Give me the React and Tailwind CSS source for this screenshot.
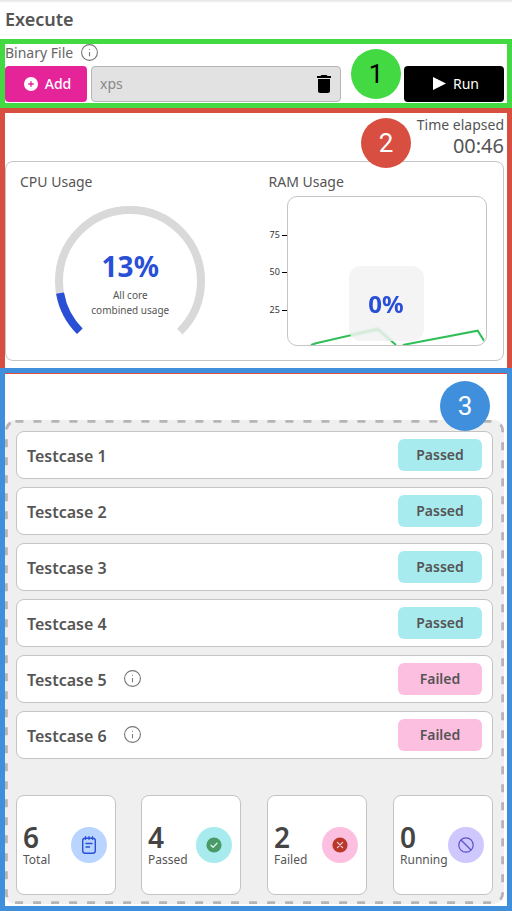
import React from 'react';
import { Info } from 'lucide-react';

const testcases = [
  { name: 'Testcase 1', status: 'Passed' },
  { name: 'Testcase 2', status: 'Passed' },
  { name: 'Testcase 3', status: 'Passed' },
  { name: 'Testcase 4', status: 'Passed' },
  { name: 'Testcase 5', status: 'Failed', info: true },
  { name: 'Testcase 6', status: 'Failed', info: true },
];

const TotalIcon = () => (
  <svg width="18" height="18" viewBox="0 0 18 18" fill="none" stroke="#2a4fd7" strokeWidth="1.4" strokeLinecap="round">
    <rect x="2.7" y="2.2" width="12.6" height="15" rx="2.4" />
    <path d="M5.5 0.8v2.4M9 0.8v2.4M12.5 0.8v2.4M6 7.5h6M6 11h3.5" />
  </svg>
);

const PassedIcon = () => (
  <svg width="16" height="16" viewBox="0 0 16 16" fill="none">
    <circle cx="8" cy="8" r="7.6" fill="#4a9a68" />
    <path d="M5 8.2l2.1 2 3.9-3.9" stroke="#d8f3ee" strokeWidth="1.3" strokeLinecap="round" strokeLinejoin="round" />
  </svg>
);

const FailedIcon = () => (
  <svg width="16" height="16" viewBox="0 0 16 16" fill="none">
    <circle cx="8" cy="8" r="7.6" fill="#b9382a" />
    <path d="M5.4 5.4l5.2 5.2M10.6 5.4l-5.2 5.2" stroke="#fbd5e4" strokeWidth="1.2" strokeLinecap="round" />
  </svg>
);

const RunningIcon = () => (
  <svg width="16" height="16" viewBox="0 0 16 16" fill="none" stroke="#5b4fc9" strokeWidth="1.2">
    <circle cx="8" cy="8" r="7.2" />
    <path d="M3 3l10 10" />
  </svg>
);

const stats = [
  { value: 6, label: 'Total', circle: 'bg-[#b8d4ff]', Icon: TotalIcon },
  { value: 4, label: 'Passed', circle: 'bg-[#a8ebee]', Icon: PassedIcon },
  { value: 2, label: 'Failed', circle: 'bg-[#fdbfe0]', Icon: FailedIcon },
  { value: 0, label: 'Running', circle: 'bg-[#cfc8ff]', Icon: RunningIcon },
];

const Badge = ({ n, className }) => (
  <div className={`absolute w-[50px] h-[50px] rounded-full flex items-center justify-center text-[26px] font-['Roboto',sans-serif] ${className}`}>
    {n}
  </div>
);

const Gauge = () => {
  // 270 degree ring, r=71, starting bottom left
  const r = 71;
  const total = 2 * Math.PI * r;
  const arc = total * 0.75;
  return (
    <div className="relative w-[150px] h-[150px] mx-auto">
      <svg width="150" height="150" viewBox="0 0 150 150" fill="none" strokeWidth="8">
        <circle cx="75" cy="75" r={r} stroke="#d9d9d9" strokeDasharray={`${arc} ${total}`} transform="rotate(135 75 75)" />
        <circle cx="75" cy="75" r={r} stroke="#2a4fd7" strokeDasharray={`${arc * 0.13} ${total}`} transform="rotate(135 75 75)" />
      </svg>
      <div className="absolute inset-0 flex flex-col items-center pt-[41px]">
        <p className="text-[28px] leading-[38px] font-bold text-[#2a4fd7]">13%</p>
        <p className="mt-[3px] text-[10px] leading-[15px] text-[#555] text-center">All core<br />combined usage</p>
      </div>
    </div>
  );
};

const RamChart = () => (
  <div className="relative ml-[18px] w-[200px] h-[150px] border border-[#c4c4c4] rounded-[10px] bg-white">
    {[['75', 38], ['50', 75], ['25', 113]].map(([label, top]) => (
      <div key={label} className="absolute left-[-18px] flex items-center gap-[1px] h-[10px]" style={{ top: top - 5 }}>
        <span className="text-[9px] leading-[10px] text-[#333] w-[11px]">{label}</span>
        <span className="w-[5px] h-px bg-black" />
      </div>
    ))}
    <div className="absolute inset-0 overflow-hidden rounded-[10px]">
      <svg width="198" height="148" viewBox="0 0 198 148" fill="none">
        <path d="M23 148L28 146.3L89.7 132L108 148M114.7 148L189.7 133.7L198 147" stroke="#2fbf56" strokeWidth="2" />
      </svg>
    </div>
    <div className="absolute left-[61px] top-[69px] w-[75px] h-[75px] rounded-xl bg-[#f0f0f0]/75 backdrop-blur-[1px] flex items-center justify-center">
      <span className="text-[24px] font-bold text-[#2a4fd7]">0%</span>
    </div>
  </div>
);

export default function App() {
  return (
    <div className="relative w-[512px] h-[911px] overflow-hidden bg-white font-['Noto_Sans',sans-serif] text-[#555]">
      <div className="h-[39px] bg-gradient-to-b from-[#e4e4e4] from-0% to-white to-[8%] flex items-end pb-[8px] pl-[5px]">
        <h1 className="text-[18px] leading-[22px] font-semibold -mb-px pb-[2px]">Execute</h1>
      </div>

      {/* 1: binary file */}
      <section className="h-[69px] border-5 border-[#42d942] pr-[3px]">
        <div className="h-[22px] flex items-center pb-[6px] text-[14px] text-[#666]">
          Binary File
          <Info size={19} strokeWidth={1.4} className="ml-[7px] text-[#777]" />
        </div>
        <div className="flex h-[36px]">
          <button className="w-[82px] rounded bg-[#e6249a] text-white text-[14px] font-medium flex items-center justify-center gap-[7px] pl-[3px] pb-px">
            <svg width="14" height="14" viewBox="0 0 14 14">
              <circle cx="7" cy="7" r="7" fill="white" />
              <path d="M7 4.2v5.6M4.2 7h5.6" stroke="#e6249a" strokeWidth="1.4" />
            </svg>
            Add
          </button>
          <div className="ml-1 w-[250px] rounded border border-[#b5b5b5] bg-[#e2e2e2] flex items-center justify-between pl-[8px] pr-[4px] pb-px text-[14px] text-[#888]">
            xps
            <svg width="24" height="24" viewBox="0 0 24 24" fill="black">
              <path d="M6 19c0 1.1.9 2 2 2h8c1.1 0 2-.9 2-2V7H6v12zM19 4h-3.5l-1-1h-5l-1 1H5v2h14V4z" />
            </svg>
          </div>
          <button className="ml-auto w-[100px] rounded bg-black text-white text-[14px] flex items-center justify-center gap-[7px] pl-[4px] pb-px">
            <svg width="13" height="13" viewBox="0 0 13 13" fill="white"><path d="M0 0l13 6.5L0 13z" /></svg>
            Run
          </button>
        </div>
      </section>

      {/* 2: usage */}
      <section className="h-[266px] border-5 border-[#d84e41] pr-[3px]">
        <div className="h-[48px] flex flex-col items-end">
          <p className="text-[14px] leading-[22px] mt-px">Time elapsed</p>
          <p className="text-[20px] leading-[24px] -mt-[2px]">00:46</p>
        </div>
        <div className="h-[200px] border border-[#c4c4c4] rounded-lg grid grid-cols-2 bg-white">
          <div className="px-[14px] pt-[10px]">
            <p className="text-[14px] leading-[20px] mb-[14px]">CPU Usage</p>
            <Gauge />
          </div>
          <div className="px-[14px] pt-[10px]">
            <p className="text-[14px] leading-[20px] mb-[4px]">RAM Usage</p>
            <RamChart />
          </div>
        </div>
      </section>

      {/* 3: testcases */}
      <section className="-mt-[6px] h-[543px] border-5 border-[#3f8fdc] pr-[3px]">
        <div className="relative mt-[47px] h-[484px] rounded-[10px] bg-[#efefef] px-[11px] pt-[11px]">
          <svg className="absolute left-0 top-0 w-full h-full pointer-events-none" fill="none">
            <rect x="1.4" y="1.4" width="496.2" height="481.2" rx="9" stroke="#b5b5b5" strokeWidth="2.8" strokeDasharray="8 10" />
          </svg>
          <div className="relative flex flex-col gap-2">
            {testcases.map((t) => (
              <div key={t.name} className="h-[48px] border border-[#c4c4c4] rounded-lg bg-white flex items-center pl-[10px] pr-[10px]">
                <span className="text-[16px] font-semibold pt-px">{t.name}</span>
                {t.info && <Info size={19} strokeWidth={1.4} className="ml-[16px] text-[#777] -mt-[2px]" />}
                <span className={`ml-auto w-[84px] h-[32px] rounded-md flex items-center justify-center pb-px text-[14px] font-semibold ${t.status === 'Passed' ? 'bg-[#a8ebee]' : 'bg-[#fdbfe0]'}`}>
                  {t.status}
                </span>
              </div>
            ))}
          </div>
          <div className="relative mt-[36px] flex gap-[26px]">
            {stats.map(({ value, label, circle, Icon }) => (
              <div key={label} className="first:mr-[-1px] w-[100px] h-[100px] border border-[#c4c4c4] rounded-lg bg-white flex items-center justify-between pl-[6px] pr-[8px]">
                <div>
                  <p className="text-[28px] leading-[28px] font-semibold text-[#444]">{value}</p>
                  <p className="mt-px text-[12px] leading-[16px]">{label}</p>
                </div>
                <div className={`w-[36px] h-[36px] rounded-full flex items-center justify-center ${circle}`}>
                  <Icon />
                </div>
              </div>
            ))}
          </div>
        </div>
      </section>

      <Badge n="1" className="left-[351px] top-[49px] bg-[#42d942] text-black" />
      <Badge n="2" className="left-[361px] top-[118px] bg-[#d84e41] text-white" />
      <Badge n="3" className="left-[440px] top-[381px] bg-[#3f8fdc] text-white" />
    </div>
  );
}
